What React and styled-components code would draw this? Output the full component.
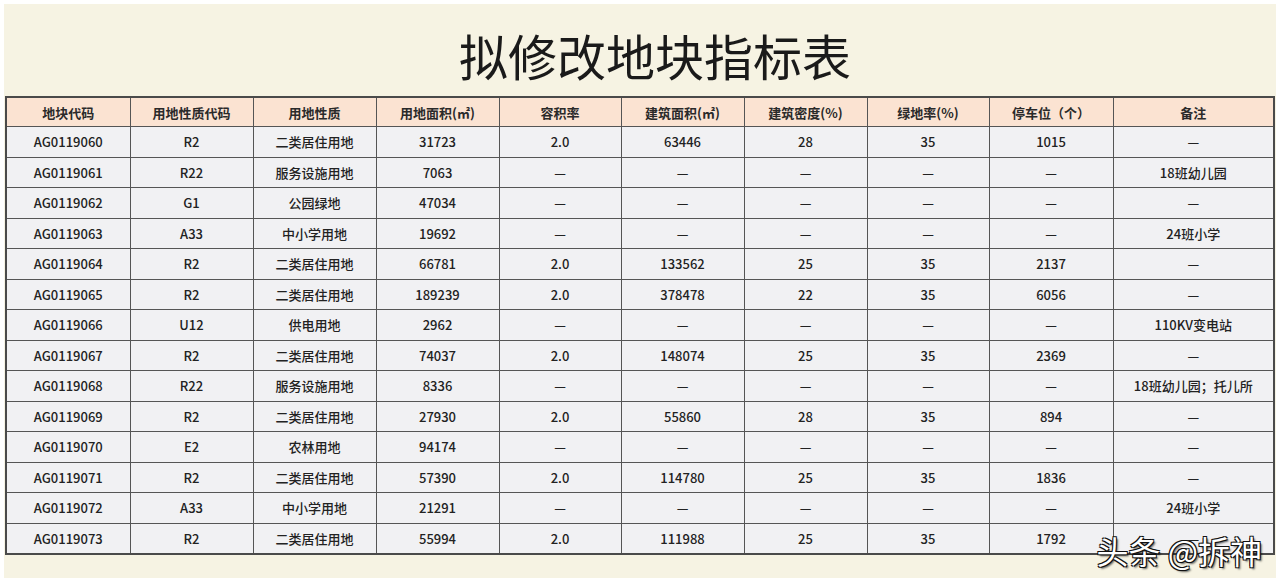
import React from "react";
import styled, { createGlobalStyle } from "styled-components";

const GlobalStyle = createGlobalStyle`
  html, body {
    margin: 0;
    padding: 0;
    background: #ffffff;
  }
`;

const Page = styled.div`
  width: 1280px;
  height: 584px;
  padding: 4px;
  box-sizing: border-box;
  background: #ffffff;
  font-family: "Noto Sans CJK SC", "Noto Sans", sans-serif;
`;

const Panel = styled.div`
  position: relative;
  height: 574px;
  background: #f6f3e3;
  display: flex;
  flex-direction: column;
`;

const Title = styled.h1`
  margin: 0;
  height: 92px;
  display: flex;
  align-items: center;
  justify-content: center;
  padding: 8px 0 0 30px;
  box-sizing: border-box;
  font-size: 49px;
  font-weight: 400;
  color: #1a1a1a;
`;

const Table = styled.table`
  border-collapse: collapse;
  width: 1268px;
  margin-left: 1px;
  table-layout: fixed;
  border: 2px solid #4a4a4a;
`;

const HeadCell = styled.th`
  height: 28px;
  padding: 0;
  background: #fbe3d2;
  border: 1.5px solid #555;
  font-size: 13px;
  font-weight: 700;
  color: #2a2a2a;
  text-align: center;
  white-space: nowrap;
`;

const Cell = styled.td`
  height: 29.5px;
  padding: 0;
  background: #f1f1f3;
  border: 1.5px solid #555;
  font-size: 13px;
  font-weight: 500;
  color: #222;
  text-align: center;
  white-space: nowrap;
`;

const Watermark = styled.div`
  position: absolute;
  right: 14px;
  bottom: 12px;
  font-size: 32px;
  line-height: 1;
  color: #ffffff;
  text-shadow: 1px 1px 0 #111, -1px -1px 0 #111, 1px -1px 0 #111, -1px 1px 0 #111,
    2px 2px 2px rgba(0, 0, 0, 0.6);
  font-family: "Noto Sans CJK SC", sans-serif;
`;

const widths = [124, 123, 123, 123, 122, 123, 123, 122, 124, 161];

const headers = [
  "地块代码",
  "用地性质代码",
  "用地性质",
  "用地面积(㎡)",
  "容积率",
  "建筑面积(㎡)",
  "建筑密度(%)",
  "绿地率(%)",
  "停车位（个）",
  "备注",
];

const D = "—";

const rows = [
  ["AG0119060", "R2", "二类居住用地", "31723", "2.0", "63446", "28", "35", "1015", D],
  ["AG0119061", "R22", "服务设施用地", "7063", D, D, D, D, D, "18班幼儿园"],
  ["AG0119062", "G1", "公园绿地", "47034", D, D, D, D, D, D],
  ["AG0119063", "A33", "中小学用地", "19692", D, D, D, D, D, "24班小学"],
  ["AG0119064", "R2", "二类居住用地", "66781", "2.0", "133562", "25", "35", "2137", D],
  ["AG0119065", "R2", "二类居住用地", "189239", "2.0", "378478", "22", "35", "6056", D],
  ["AG0119066", "U12", "供电用地", "2962", D, D, D, D, D, "110KV变电站"],
  ["AG0119067", "R2", "二类居住用地", "74037", "2.0", "148074", "25", "35", "2369", D],
  ["AG0119068", "R22", "服务设施用地", "8336", D, D, D, D, D, "18班幼儿园；托儿所"],
  ["AG0119069", "R2", "二类居住用地", "27930", "2.0", "55860", "28", "35", "894", D],
  ["AG0119070", "E2", "农林用地", "94174", D, D, D, D, D, D],
  ["AG0119071", "R2", "二类居住用地", "57390", "2.0", "114780", "25", "35", "1836", D],
  ["AG0119072", "A33", "中小学用地", "21291", D, D, D, D, D, "24班小学"],
  ["AG0119073", "R2", "二类居住用地", "55994", "2.0", "111988", "25", "35", "1792", D],
];

export default function App() {
  return (
    <>
      <GlobalStyle />
      <Page>
        <Panel>
          <Title>拟修改地块指标表</Title>
          <Table>
            <colgroup>
              {widths.map((w, i) => (
                <col key={i} style={{ width: w }} />
              ))}
            </colgroup>
            <thead>
              <tr>
                {headers.map((h) => (
                  <HeadCell key={h}>{h}</HeadCell>
                ))}
              </tr>
            </thead>
            <tbody>
              {rows.map((r) => (
                <tr key={r[0]}>
                  {r.map((c, i) => (
                    <Cell key={i}>{c}</Cell>
                  ))}
                </tr>
              ))}
            </tbody>
          </Table>
          <Watermark>头条 @拆神</Watermark>
        </Panel>
      </Page>
    </>
  );
}
